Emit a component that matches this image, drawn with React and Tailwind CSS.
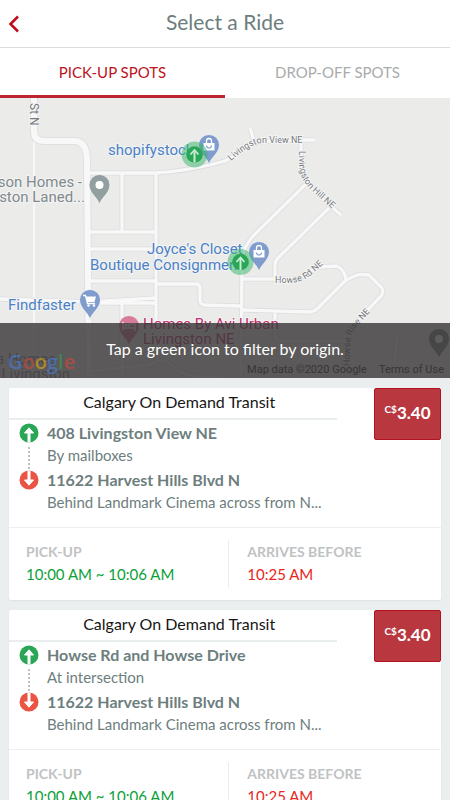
import React from "react";

const rides = [
  {
    id: "view",
    operator: "Calgary On Demand Transit",
    price: "3.40",
    from: "408 Livingston View NE",
    fromNote: "By mailboxes",
    to: "11622 Harvest Hills Blvd N",
    toNote: "Behind Landmark Cinema across from N...",
    pickup: "10:00 AM ~ 10:06 AM",
    arrival: "10:25 AM",
  },
  {
    id: "howse",
    operator: "Calgary On Demand Transit",
    price: "3.40",
    from: "Howse Rd and Howse Drive",
    fromNote: "At intersection",
    to: "11622 Harvest Hills Blvd N",
    toNote: "Behind Landmark Cinema across from N...",
    pickup: "10:00 AM ~ 10:06 AM",
    arrival: "10:25 AM",
  },
];

const roads = [
  "M90 172H155Q190 170 225 160Q240 152 253 141L300 139H315",
  "M250 127L254 140",
  "M122 172V231M156 172V320M90 231H156M90 248H156M90 280H156L156 283H196Q200 283 200 287V299Q200 303 204 304L241 305",
  "M0 298L90 301L156 297M90 302H156M122 302V377",
  "M301 139V162Q302 176 309 184L326 201L341 214",
  "M306 183L254 234Q242 247 242 262L241 377",
  "M329 207L278 257Q275 260 275 264V278H242",
  "M275 278H298L318 266L337 265Q345 269 346 279L357 274Q361 273 369 274L382 287Q384 291 381 295L363 314Q348 330 347 345V377",
  "M346 279L318 307Q314 311 308 311L242 309",
  "M275 312V336Q276 340 281 340H345M397 335L395 361",
  "M90 370L150 364Q163 352 178 370Q195 378 225 377",
];

function Pin({ x, y, color, children }) {
  return (
    <g transform={`translate(${x} ${y})`}>
      <path
        d="M0 20C-1 13-10 9-10.500 0A10.500 10.500 0 0 1 10.500 0C10 9 1 13 0 20Z"
        fill={color}
        stroke="#f5f5f5"
        strokeWidth="0.8"
      />
      {children}
    </g>
  );
}

function Bag() {
  return (
    <>
      <path d="M-5.500-2H5.500V5.500H-5.500Z" fill="#fff" />
      <path d="M-2.500-2V-4A2.500 2.500 0 0 1 2.500-4V-2" fill="none" stroke="#fff" strokeWidth="1.300" />
      <path d="M-2.500 0.500A2.500 2.500 0 0 0 2.500 0.500" fill="none" stroke="#7f9ccd" strokeWidth="1.200" />
    </>
  );
}

function Stop({ x, y }) {
  return (
    <g transform={`translate(${x} ${y})`}>
      <circle r="13" fill="#34b567" opacity="0.5" />
      <circle r="8.300" fill="#2aa657" />
      <path d="M0 8V-3" stroke="#c9ecd5" strokeWidth="2" />
      <path d="M-4 0L0-4.500L4 0" fill="none" stroke="#c9ecd5" strokeWidth="1.800" />
    </g>
  );
}

function RideMap() {
  return (
    <svg
      viewBox="0 97 450 280"
      preserveAspectRatio="xMidYMid slice"
      className="block h-[280px] w-full font-[Roboto,sans-serif]"
      role="img"
      aria-label="Map of pick-up spots"
    >
      <rect y="97" width="450" height="280" fill="#ebebea" />
      <path d="M34 140V377" stroke="#f7f7f7" strokeWidth="2" />
      <g fill="none" stroke="#dcdde0" strokeWidth="5" strokeLinejoin="round">
        {roads.map((d) => (
          <path key={d} d={d} />
        ))}
      </g>
      <path d="M34 97V130Q34 140 44 140H74Q87 140 87 160L89 377" fill="none" stroke="#dfe0e2" strokeWidth="8" />
      <g fill="none" stroke="#f8f8f8" strokeWidth="3.300" strokeLinejoin="round">
        {roads.map((d) => (
          <path key={d} d={d} />
        ))}
      </g>
      <path d="M34 97V130Q34 140 44 140H74Q87 140 87 160L89 377" fill="none" stroke="#f8f8f8" strokeWidth="6" />

      <defs>
        <path id="viewRoad" d="M231 160Q250 143 262 142H320" />
        <path id="hillRoad" d="M299 150V162Q300 178 310 188L350 224" />
        <path id="howseRoad" d="M275 282H292Q304 280 310 275L330 257" />
        <path id="riseRoad" d="M350 365V345Q351 330 359 323L380 300" />
      </defs>
      <g fontSize="9" fill="#77797c" stroke="#f4f4f4" strokeWidth="2" paintOrder="stroke">
        <text><textPath href="#viewRoad">Livingston View NE</textPath></text>
        <text><textPath href="#hillRoad">Livingston Hill NE</textPath></text>
        <text><textPath href="#howseRoad">Howse Rd NE</textPath></text>
        <text><textPath href="#riseRoad">Howse Rise NE</textPath></text>
        <text transform="translate(30 102) rotate(90)" fontSize="12">St N</text>
      </g>

      <Pin x={209} y={144} color="#7f9ccd"><Bag /></Pin>
      <Pin x={259} y={251} color="#7f9ccd"><Bag /></Pin>
      <Pin x={99.500} y={184} color="#919fa0"><circle r="4" fill="#fff" /></Pin>
      <Pin x={439} y={338} color="#7b8586"><circle r="4" fill="#fff" /></Pin>
      <Pin x={90} y={299} color="#7f9ccd">
        <path d="M-7-4.500H-4.500L-2.500 3.500H5" fill="none" stroke="#fff" strokeWidth="1.300" />
        <path d="M-4-3.500H6L4.500 2H-2.500Z" fill="#fff" />
        <circle cx="-1.500" cy="5.500" r="1.200" fill="#fff" />
        <circle cx="4" cy="5.500" r="1.200" fill="#fff" />
      </Pin>
      <Pin x={129} y={325} color="#d77c9a">
        <path d="M-6-4V5M-6 2H6V5M6 2V-2H0V2" fill="none" stroke="#fff" strokeWidth="1.400" />
        <circle cx="-3" cy="-1" r="1.500" fill="#fff" />
      </Pin>

      <g fontSize="15" stroke="#f4f4f4" strokeWidth="2" paintOrder="stroke" strokeLinejoin="round">
        <g fill="#4a81c6">
          <text x="108" y="154">shopifystock</text>
          <text x="147" y="253">Joyce&#39;s Closet</text>
          <text x="90" y="269">Boutique Consignment</text>
          <text x="8" y="309">Findfaster</text>
        </g>
        <g fill="#7f898c">
          <text x="82" y="186" textAnchor="end">son Homes -</text>
          <text x="85" y="201" textAnchor="end">ston Laned...</text>
          <text x="56" y="363" textAnchor="end">a Homes</text>
          <text x="82" y="378" textAnchor="end">- Livingston...</text>
        </g>
        <g fill="#c02c6c">
          <text x="143" y="328">Homes By Avi Urban</text>
          <text x="143" y="343">Livingston NE</text>
        </g>
      </g>
      <Stop x={194.500} y={153.500} />
      <Stop x={240.500} y={261} />
    </svg>
  );
}

function GoogleMark() {
  return (
    <span className="absolute bottom-[6px] left-2 font-['Open_Sans',sans-serif] text-xl leading-5 font-semibold opacity-50">
      <span className="text-[#4285f4]">G</span>
      <span className="text-[#ea4335]">o</span>
      <span className="text-[#fbbc05]">o</span>
      <span className="text-[#4285f4]">g</span>
      <span className="text-[#34a853]">l</span>
      <span className="text-[#ea4335]">e</span>
    </span>
  );
}

function RouteMarks() {
  return (
    <svg viewBox="0 0 20 68" className="mt-[2px] h-[68px] w-5 shrink-0" aria-hidden="true">
      <circle cx="10" cy="10" r="9.500" fill="#2aa657" />
      <path d="M10 19.500V8" stroke="#fff" strokeWidth="3" />
      <path d="M5.500 10L10 4.800L14.500 10Z" fill="#fff" stroke="#fff" strokeLinejoin="round" />
      <path d="M10 24V46" stroke="#bdbfc0" strokeWidth="2" strokeDasharray="2 2" />
      <circle cx="10" cy="57" r="9.500" fill="#e95445" />
      <path d="M10 47.500V59" stroke="#fff" strokeWidth="3" />
      <path d="M5.500 57L10 62.200L14.500 57Z" fill="#fff" stroke="#fff" strokeLinejoin="round" />
    </svg>
  );
}

function RideCard({ ride }) {
  return (
    <article className="rounded-xs bg-white shadow-xs">
      <div className="flex h-[139px] justify-between">
        <div className="w-[76%] min-w-0">
          <h2 className="h-8 border-b-2 border-[#e9eded] pt-1 pl-3 text-center text-base leading-5 text-[#161616]">
            {ride.operator}
          </h2>
          <div className="flex gap-2 pt-px pl-[10px] text-[#6d7e7e]">
            <RouteMarks />
            <div className="flex flex-col gap-[3px] whitespace-nowrap">
              <div>
                <h3 className="text-base leading-6 font-bold">{ride.from}</h3>
                <p className="text-[15px] leading-5">{ride.fromNote}</p>
              </div>
              <div>
                <h3 className="text-base leading-6 font-bold">{ride.to}</h3>
                <p className="text-[15px] leading-5">{ride.toNote}</p>
              </div>
            </div>
          </div>
        </div>
        <p className="flex h-[52px] w-[67px] items-center justify-center rounded-xs border border-[#b5121f] bg-[#b9383f] pb-[2px] font-bold text-white">
          <span className="mb-2 text-[10px]">C$</span>
          <span className="text-[17px]">{ride.price}</span>
        </p>
      </div>
      <dl className="flex h-[73px] border-t border-[#edf0f0] py-3">
        <div className="w-[51%] border-r border-[#e6eeee] pl-[17px]">
          <dt className="text-sm leading-6 font-bold text-[#c0c2c3]">PICK-UP</dt>
          <dd className="text-[15px] leading-5 text-[#0aa138]">{ride.pickup}</dd>
        </div>
        <div className="pl-[18px]">
          <dt className="text-sm leading-6 font-bold text-[#c0c2c3]">ARRIVES BEFORE</dt>
          <dd className="text-[15px] leading-5 text-[#e62722]">{ride.arrival}</dd>
        </div>
      </dl>
    </article>
  );
}

export default function App() {
  return (
    <div className="flex h-screen flex-col overflow-hidden bg-[#eaeeef] font-[Lato,sans-serif]">
      <header className="grid h-12 shrink-0 grid-cols-[40px_1fr_40px] items-center border-b border-[#dcdcdc] bg-white">
        <button type="button" aria-label="Back" className="flex h-full items-center pl-2">
          <svg viewBox="0 0 12 18" className="h-[18px] w-3" fill="none" stroke="#c10a1a" strokeWidth="2.500">
            <path d="M10 1.500L2.500 9L10 16.500" />
          </svg>
        </button>
        <h1 className="pb-1 text-center text-[21px] leading-7 text-[#6d7e7e]">Select a Ride</h1>
      </header>
      <nav className="grid h-[50px] shrink-0 grid-cols-2 bg-white text-[15px]">
        <button type="button" className="border-b-3 border-[#bd2530] pt-[2px] text-[#bb1320]">PICK-UP SPOTS</button>
        <button type="button" className="border-b-3 border-transparent pt-[2px] text-[#a9abac]">DROP-OFF SPOTS</button>
      </nav>
      <main className="min-h-0 flex-1 overflow-y-auto [scrollbar-width:none]">
        <section className="relative">
          <RideMap />
          <div className="absolute inset-x-0 bottom-0 h-[55px] bg-[#3b3839]/82">
            <p className="pt-4 text-center text-base leading-5 text-white">Tap a green icon to filter by origin.</p>
            <GoogleMark />
            <div className="flex justify-end gap-3 pr-[6px] pt-[3px] font-[Roboto,sans-serif] text-[11px] leading-4 text-[#383637]">
              <span>Map data ©2020 Google</span>
              <a href="#terms">Terms of Use</a>
            </div>
          </div>
        </section>
        <section className="flex flex-col gap-[10px] px-[9px] py-[10px]" aria-label="Available rides">
          {rides.map((ride) => (
            <RideCard key={ride.id} ride={ride} />
          ))}
        </section>
      </main>
    </div>
  );
}
